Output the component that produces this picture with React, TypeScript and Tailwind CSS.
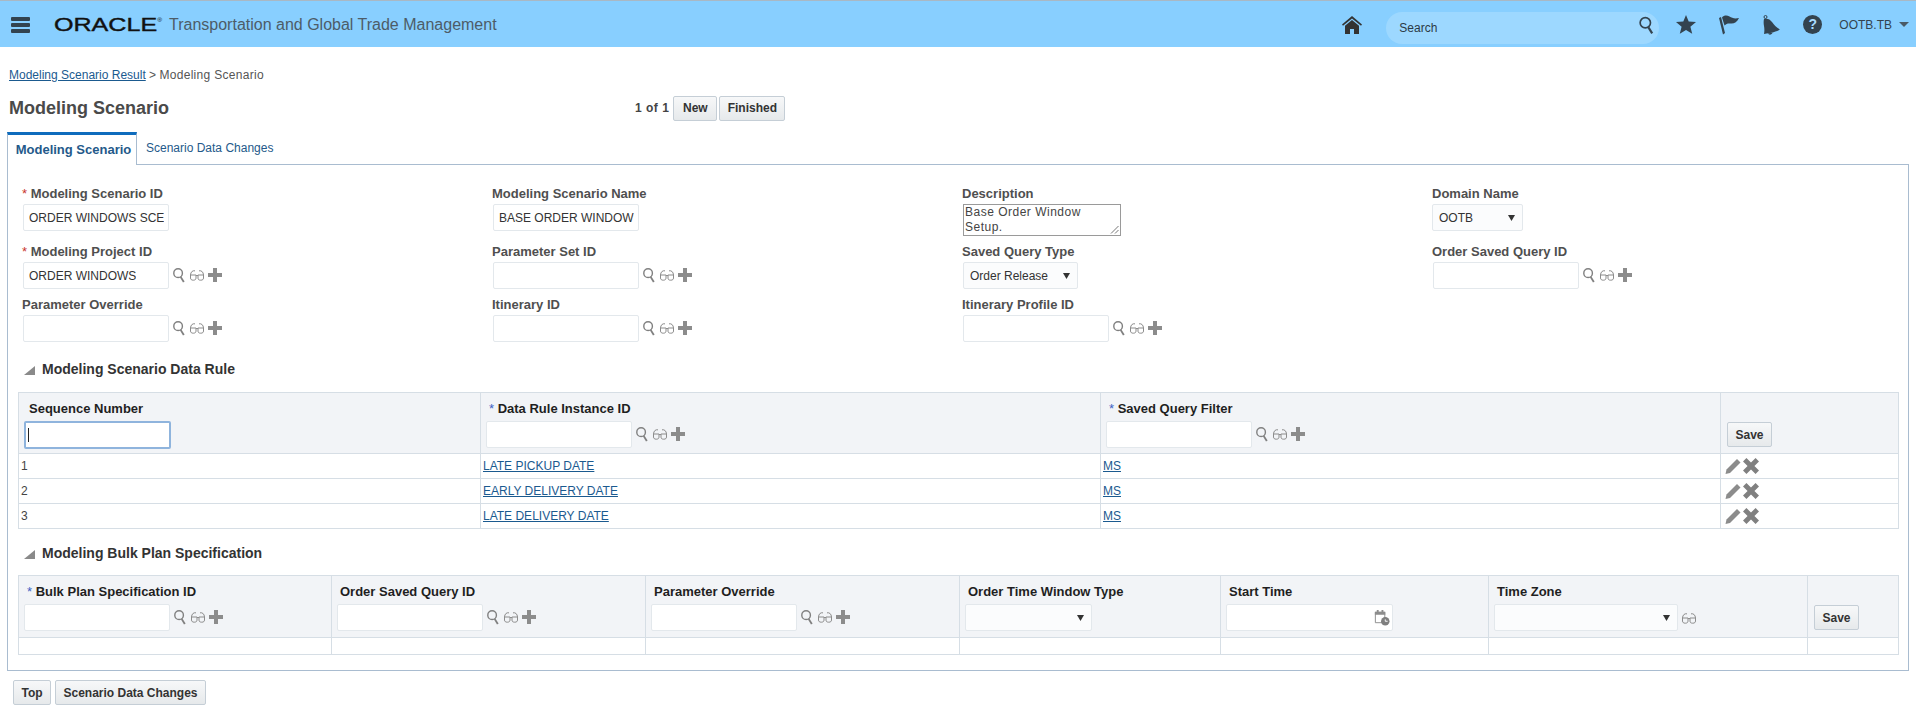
import React from "react";

const Search = ({ className }: { className: string }) => (
  <svg viewBox="0 0 16 16" className={className} fill="none" stroke="currentColor">
    <circle cx="6.5" cy="6" r="4.6" strokeWidth="1.5" />
    <path d="M9.2 10 12.6 15.4" strokeWidth="2" />
  </svg>
);

const Glasses = () => (
  <svg viewBox="0 0 16 14" className="w-[16px] h-[14px] text-[#8c8c8c]" fill="none" stroke="currentColor" strokeWidth="1">
    <path d="M1.500 7h5.500v3c0 1.400-.9 2.200-2.700 2.200S1.500 11.400 1.500 10zM9 7h5.500v3c0 1.400-.9 2.200-2.800 2.200S9 11.400 9 10z" />
    <path d="M1.500 7C1.700 4 3.500 2.300 6 2.800M14.500 7C14.300 4 12.500 2.300 10 2.800M7 7.500h2" />
  </svg>
);

const Plus = () => (
  <svg viewBox="0 0 14 14" className="w-[14px] h-[14px] text-[#8c8c8c]" fill="currentColor">
    <path d="M5 0h4v5h5v4H9v5H5V9H0V5h5z" />
  </svg>
);

const Lookup = () => (
  <span className="flex items-center ml-[3px] h-[25px]">
    <Search className="w-[15px] h-[16px] text-[#808080]" />
    <span className="ml-[2px] flex"><Glasses /></span>
    <span className="ml-[3px] flex"><Plus /></span>
  </span>
);

const inputCls = "h-[27px] w-[146px] bg-white border border-[#e3e8ec] rounded-[2px] pl-[5px] pr-[1px] text-[12px] text-[#333] flex items-center";

function TextBox({ value }: { value?: string }) {
  return <div className={inputCls}><span className="overflow-hidden whitespace-nowrap">{value}</span></div>;
}

function SelectBox({ value, w }: { value?: string; w: string }) {
  return (
    <div className={`h-[27px] ${w} bg-[#fbfcfd] border border-[#e3e8ec] rounded-[2px] pl-[6px] pr-[7px] text-[12px] text-[#333] flex items-center justify-between`}>
      <span>{value}</span>
      <svg viewBox="0 0 8 8" className="w-[7px] h-[7px] text-[#333]" fill="currentColor"><path d="M0 1h8L4 8z" /></svg>
    </div>
  );
}

function Field({ label, star, children }: { label: string; star?: boolean; children: React.ReactNode }) {
  return (
    <div>
      <div className="h-[16px] mb-[2px] text-[13px] leading-[16px] font-bold text-[#4f4f4f] whitespace-nowrap">
        {star && <span className="text-[#c9352b] font-normal">* </span>}
        {label}
      </div>
      {children}
    </div>
  );
}

function LookupField({ label, star, value }: { label: string; star?: boolean; value?: string }) {
  return (
    <Field label={label} star={star}>
      <div className="flex ml-[1px]">
        <TextBox value={value} />
        <Lookup />
      </div>
    </Field>
  );
}

function SectionTitle({ children }: { children: React.ReactNode }) {
  return (
    <div className="flex items-center h-[16px] text-[14px] font-bold text-[#333] ml-[6px]">
      <svg viewBox="0 0 11 9" className="w-[11px] h-[9px] mr-[7px] mt-[3px] text-[#8a8a8a]" fill="currentColor"><path d="M11 0v9H0z" /></svg>
      {children}
    </div>
  );
}

function Th({ label, star, w, pl, children }: { label?: string; star?: boolean; w: string; pl?: string; children?: React.ReactNode }) {
  return (
    <th className={`${w} p-0 align-top font-normal text-left border border-[#d6dee5] bg-[#f2f4f7]`}>
      <div className={`h-[28px] pt-[8px] ${pl ?? "pl-[8px]"} text-[13px] leading-[16px] font-bold text-[#1f1f1f] whitespace-nowrap`}>
        {star && <span className="text-[#3a62c4] font-normal">* </span>}
        {label}
      </div>
      <div className="flex pl-[5px]">{children}</div>
    </th>
  );
}

const Td = ({ children }: { children?: React.ReactNode }) => (
  <td className="h-[25px] p-0 pl-[2px] border border-[#d6dee5] text-[12px] text-[#444]">{children}</td>
);

const Link = ({ children }: { children: React.ReactNode }) => (
  <a className="text-[#1b5a8f] underline text-[12px]">{children}</a>
);

function Btn({ children, cls }: { children: React.ReactNode; cls: string }) {
  return (
    <button className={`${cls} h-[25px] flex items-center justify-center border border-[#c5ced6] rounded-[2px] bg-gradient-to-b from-[#f7f8f9] to-[#e6e9eb] text-[12px] font-bold text-[#333]`}>
      {children}
    </button>
  );
}

const Actions = () => (
  <div className="flex items-center gap-[2px] pl-[2px]">
    <svg viewBox="0 0 16 16" className="w-[16px] h-[17px] text-[#8c8c8c]" fill="currentColor"><path d="M12 .5 15.500 4 5 14.500 .5 15.500 1.500 11z" /></svg>
    <svg viewBox="0 0 14 14" className="w-[16px] h-[16px] text-[#808080]" fill="currentColor"><path d="M3 0l4 4 4-4 3 3-4 4 4 4-3 3-4-4-4 4-3-3 4-4-4-4z" /></svg>
  </div>
);

export default function App() {
  return (
    <div className="w-[1916px] h-[716px] overflow-hidden bg-white font-['Liberation_Sans',Arial,sans-serif]">
      <header className="h-[47px] pt-[1px] bg-[#88cfff] border-t border-[#a9b8c4] flex items-center text-[#2c3a45]">
        <div className="ml-[11px] w-[19px] flex flex-col gap-[2px]">
          <span className="h-[4px] bg-[#33434f] rounded-[1px]" />
          <span className="h-[4px] bg-[#33434f] rounded-[1px]" />
          <span className="h-[4px] bg-[#33434f] rounded-[1px]" />
        </div>
        <div className="ml-[24px] w-[115px] text-[19px] leading-[20px] text-[#111] origin-left scale-x-[1.32] [-webkit-text-stroke:0.4px_#111] whitespace-nowrap">
          ORACLE<span className="align-top text-[5px] leading-[10px] [-webkit-text-stroke:0px]">®</span>
        </div>
        <div className="text-[16px] text-[#4d5c68]">Transportation and Global Trade Management</div>

        <div className="ml-auto flex items-center">
          <svg viewBox="0 0 20 18" className="w-[20px] h-[18px] text-[#333]" fill="currentColor">
            <path d="M10 0 0 8.500l1 1.300L10 2.500l9 7.300 1-1.300z" />
            <path d="M10 4 3 9.700V18h5v-5h4v5h5V9.700z" />
          </svg>
          <div className="ml-[24px] w-[273px] h-[32px] mt-[6px] bg-[#9dd8ff] rounded-full flex items-center justify-between pl-[13px] pr-[3px] text-[12px] text-[#2c3a45]">
            <span>Search</span>
            <Search className="w-[18px] h-[20px] text-[#33434f] -mt-[6px]" />
          </div>
          <svg viewBox="0 0 20 19" className="ml-[17px] w-[20px] h-[19px] text-[#33434f]" fill="currentColor">
            <path d="M10 0l2.700 6.600 7.300.5-5.600 4.600 1.800 7.100L10 15l-6.200 3.800 1.800-7.100L0 7.100l7.300-.5z" />
          </svg>
          <svg viewBox="0 0 20 20" className="ml-[23px] w-[20px] h-[20px] text-[#33434f]" fill="currentColor">
            <path d="M0 3l2-1 4 16-2 1.500z" />
            <path d="M3 2.500C5 0 8 0 10.500 1.500c2.500 1.500 5 2.500 9.500 1.500-2 4-5 6-8.500 5.500-2.500-.3-4.500.3-6 2z" />
          </svg>
          <svg viewBox="0 0 20 20" className="ml-[22px] w-[20px] h-[20px] text-[#33434f]" fill="currentColor">
            <circle cx="4.500" cy="2" r="1.500" fill="none" stroke="currentColor" />
            <path d="M3 4c3-1 6 0 8 3s4 5 8 7.500c-3 2-9 3.500-16 4.500 .5-3 .5-5 0-8-.5-2.500-.5-5 0-7z" />
            <path d="M7 18.500l4.500-1c-.3 2.200-3.500 3-4.500 1z" />
          </svg>
          <div className="ml-[22px] w-[19px] h-[19px] rounded-full bg-[#33434f] text-[#a9dcff] text-[14px] font-bold leading-[19px] text-center">?</div>
          <span className="ml-[17px] text-[12px] text-[#33434f]">OOTB.TB</span>
          <svg viewBox="0 0 10 5" className="ml-[7px] mr-[7px] w-[10px] h-[5px] text-[#4a5a66]" fill="currentColor"><path d="M0 0h10L5 5z" /></svg>
        </div>
      </header>

      <div className="px-[7px]">
        <div className="mt-[20px] ml-[2px] h-[16px] text-[12px] leading-[16px] text-[#555]">
          <a className="text-[#1b5a8f] underline">Modeling Scenario Result</a> &gt; <span className="tracking-[0.3px]">Modeling Scenario</span>
        </div>

        <div className="mt-[13px] h-[24px] flex items-center">
          <h1 className="ml-[2px] w-[626px] text-[18px] font-bold text-[#4a4a4a]">Modeling Scenario</h1>
          <span className="text-[12px] font-bold text-[#444] mr-[4px] tracking-[0.5px]">1 of 1</span>
          <Btn cls="w-[44px]">New</Btn>
          <span className="w-[2px]" />
          <Btn cls="w-[66px]">Finished</Btn>
        </div>

        <div className="mt-[12px] h-[32px] flex">
          <div className="w-[130px] h-[33px] pl-[3px] border-x border-[#a9bcd0] border-t-[3px] border-t-[#0f6cbd] bg-white relative z-10 flex items-center justify-center text-[13px] font-bold text-[#24598a]">
            Modeling Scenario
          </div>
          <div className="ml-[9px] h-[32px] flex items-center text-[12px] text-[#24598a]">Scenario Data Changes</div>
        </div>

        <div className="border border-[#a9bcd0] pt-[21px] pb-[15px] pl-[10px] pr-[10px] h-[507px]">
          <div className="grid grid-cols-[470px_470px_470px_1fr] gap-y-[8px] pl-[4px]">
            <Field label="Modeling Scenario ID" star><div className="ml-[1px]"><TextBox value="ORDER WINDOWS SCE" /></div></Field>
            <Field label="Modeling Scenario Name"><div className="ml-[1px]"><TextBox value="BASE ORDER WINDOW" /></div></Field>
            <Field label="Description">
              <div className="relative ml-[1px] w-[158px] h-[32px] border border-[#9a9a9a] px-[1px] text-[12px] leading-[15px] tracking-[0.5px] text-[#444]">
                Base Order Window<br />Setup.
                <svg viewBox="0 0 9 9" className="absolute right-[1px] bottom-[1px] w-[9px] h-[9px] text-[#777]" fill="none" stroke="currentColor" strokeWidth="1">
                  <path d="M1 8.500 8.500 1M5 8.500 8.500 5" />
                </svg>
              </div>
            </Field>
            <Field label="Domain Name"><SelectBox value="OOTB" w="w-[91px]" /></Field>

            <LookupField label="Modeling Project ID" star value="ORDER WINDOWS" />
            <LookupField label="Parameter Set ID" />
            <Field label="Saved Query Type"><div className="ml-[1px]"><SelectBox value="Order Release" w="w-[115px]" /></div></Field>
            <LookupField label="Order Saved Query ID" />

            <LookupField label="Parameter Override" />
            <LookupField label="Itinerary ID" />
            <LookupField label="Itinerary Profile ID" />
          </div>

          <div className="mt-[19px]"><SectionTitle>Modeling Scenario Data Rule</SectionTitle></div>
          <table className="mt-[15px] w-[1880px] table-fixed border-collapse">
            <thead>
              <tr className="h-[61px]">
                <Th label="Sequence Number" w="w-[462px]" pl="pl-[10px]">
                  <div className="w-[147px] h-[28px] bg-white border-2 border-[#8fb4dd] rounded-[2px] flex items-center pl-[2px]">
                    <span className="w-[1px] h-[14px] bg-[#222]" />
                  </div>
                </Th>
                <Th label="Data Rule Instance ID" star w="w-[620px]"><TextBox /><Lookup /></Th>
                <Th label="Saved Query Filter" star w="w-[620px]"><TextBox /><Lookup /></Th>
                <Th w="w-[178px]">
                  <div className="ml-[1px] mt-[1px]"><Btn cls="w-[45px]">Save</Btn></div>
                </Th>
              </tr>
            </thead>
            <tbody>
              {[
                ["1", "LATE PICKUP DATE"],
                ["2", "EARLY DELIVERY DATE"],
                ["3", "LATE DELIVERY DATE"],
              ].map(([n, rule]) => (
                <tr key={n}>
                  <Td>{n}</Td>
                  <Td><Link>{rule}</Link></Td>
                  <Td><Link>MS</Link></Td>
                  <Td><Actions /></Td>
                </tr>
              ))}
            </tbody>
          </table>

          <div className="mt-[16px]"><SectionTitle>Modeling Bulk Plan Specification</SectionTitle></div>
          <table className="mt-[14px] w-[1880px] table-fixed border-collapse">
            <thead>
              <tr className="h-[62px]">
                <Th label="Bulk Plan Specification ID" star w="w-[313px]"><TextBox /><Lookup /></Th>
                <Th label="Order Saved Query ID" w="w-[314px]"><TextBox /><Lookup /></Th>
                <Th label="Parameter Override" w="w-[314px]"><TextBox /><Lookup /></Th>
                <Th label="Order Time Window Type" w="w-[261px]"><SelectBox w="w-[127px]" /></Th>
                <Th label="Start Time" w="w-[268px]">
                  <div className="w-[167px] h-[27px] bg-white border border-[#e3e8ec] rounded-[2px] flex items-center justify-end pr-[2px]">
                    <svg viewBox="0 0 18 18" className="w-[17px] h-[17px]">
                      <path d="M2.500 3.500h10v11h-10z" fill="none" stroke="#8c8c8c" />
                      <path d="M2 3h11v3H2zM4 1h2v2H4zM9 1h2v2H9z" fill="#8c8c8c" />
                      <circle cx="13" cy="13" r="4.500" fill="#7f7f7f" />
                      <path d="M13 11v2h2.500" fill="none" stroke="#fff" />
                    </svg>
                  </div>
                </Th>
                <Th label="Time Zone" w="w-[319px]">
                  <SelectBox w="w-[184px]" />
                  <span className="ml-[3px] flex items-center"><Glasses /></span>
                </Th>
                <Th w="w-[91px]">
                  <div className="ml-[1px] mt-[1px]"><Btn cls="w-[45px]">Save</Btn></div>
                </Th>
              </tr>
            </thead>
            <tbody>
              <tr className="h-[17px]">
                {[0, 1, 2, 3, 4, 5, 6].map((i) => (
                  <td key={i} className="p-0 border border-[#d6dee5]" />
                ))}
              </tr>
            </tbody>
          </table>
        </div>

        <div className="mt-[9px] ml-[6px] flex gap-[4px]">
          <Btn cls="w-[38px]">Top</Btn>
          <Btn cls="w-[151px]">Scenario Data Changes</Btn>
        </div>
      </div>
    </div>
  );
}
